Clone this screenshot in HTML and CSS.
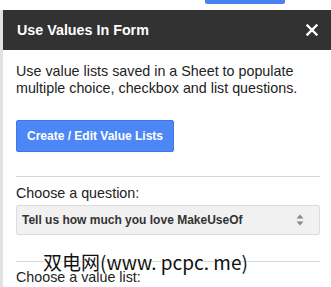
FILE: index.html
```html
<!DOCTYPE html>
<html>
<head>
<meta charset="utf-8">
<link rel="stylesheet" href="styles.css">
</head>
<body>
<div class="topbar"><div class="tab"></div></div>
<div class="panel">
  <div class="header">
    <span class="title">Use Values In Form</span>
    <svg class="close" width="12" height="12" viewBox="0 0 12 12"><path d="M1.5 1.5 L10.5 10.5 M10.5 1.5 L1.5 10.5" stroke="#fff" stroke-width="2.4" stroke-linecap="square"/></svg>
  </div>
  <div class="content">
    <p class="intro">Use value lists saved in a Sheet to populate multiple choice, checkbox and list questions.</p>
    <button class="btn">Create / Edit Value Lists</button>
    <hr class="sep">
    <div class="label">Choose a question:</div>
    <div class="select">
      <span>Tell us how much you love MakeUseOf</span>
      <svg class="arrows" width="8" height="12" viewBox="0 0 8 12"><path d="M4 0.5 L7.5 4.5 H0.5 Z M4 11.5 L7.5 7.5 H0.5 Z" fill="#888"/></svg>
    </div>
    <hr class="sep sep2">
    <div class="label label2">Choose a value list:</div>
  </div>
  <div class="watermark">双电网(www. pcpc. me)</div>
</div>
</body>
</html>
```

FILE: styles.css
```css
html, body {
  margin: 0;
  padding: 0;
  background: #fff;
  overflow: hidden;
  height: 287px;
  font-family: "Liberation Sans", Arial, sans-serif;
}
.topbar {
  height: 10px;
}
.tab {
  margin-left: 205px;
  width: 80px;
  height: 4px;
  background: #4a80f0;
  border-radius: 0 0 2px 2px;
}
.panel {
  position: relative;
  border-left: 3px solid #e2e2e2;
  height: 277px;
  overflow: hidden;
}
.header {
  height: 40px;
  background: #323232;
  display: flex;
  align-items: center;
  justify-content: space-between;
  padding: 0 13px 0 14px;
}
.title {
  color: #fff;
  font-weight: bold;
  font-size: 14.3px;
}
.close {
  display: block;
}
.content {
  padding: 0 11px 0 13px;
}
.intro {
  margin: 0;
  padding-top: 13px;
  font-size: 14.3px;
  line-height: 17px;
  color: #222;
}
.btn {
  display: block;
  margin-top: 23px;
  width: 158px;
  height: 32px;
  background: #4d87f5;
  border: 1px solid #3f78e6;
  border-radius: 2px;
  color: #fff;
  font-family: "Liberation Sans", Arial, sans-serif;
  font-weight: bold;
  font-size: 12px;
  padding: 0;
}
.sep {
  border: 0;
  border-top: 1px solid #d9d9d9;
  margin: 24px 0 0 0;
}
.label {
  margin-top: 8px;
  font-size: 14.3px;
  line-height: 17px;
  color: #222;
}
.select {
  margin-top: 3px;
  height: 28px;
  background: #f1f1f1;
  border: 1px solid #dcdcdc;
  border-radius: 2px;
  display: flex;
  align-items: center;
  justify-content: space-between;
  padding: 0 15px 0 5px;
  font-weight: bold;
  font-size: 12px;
  color: #333;
}
.arrows {
  display: block;
}
.sep2 {
  margin-top: 26px;
}
.label2 {
  margin-top: 7px;
}
.watermark {
  position: absolute;
  left: 40px;
  top: 240px;
  font-family: "Noto Sans CJK SC", sans-serif;
  font-size: 19px;
  line-height: 24px;
  color: #111;
  text-shadow: 0 0 2px #fff, 0 0 2px #fff, 0 0 2px #fff;
}
```
